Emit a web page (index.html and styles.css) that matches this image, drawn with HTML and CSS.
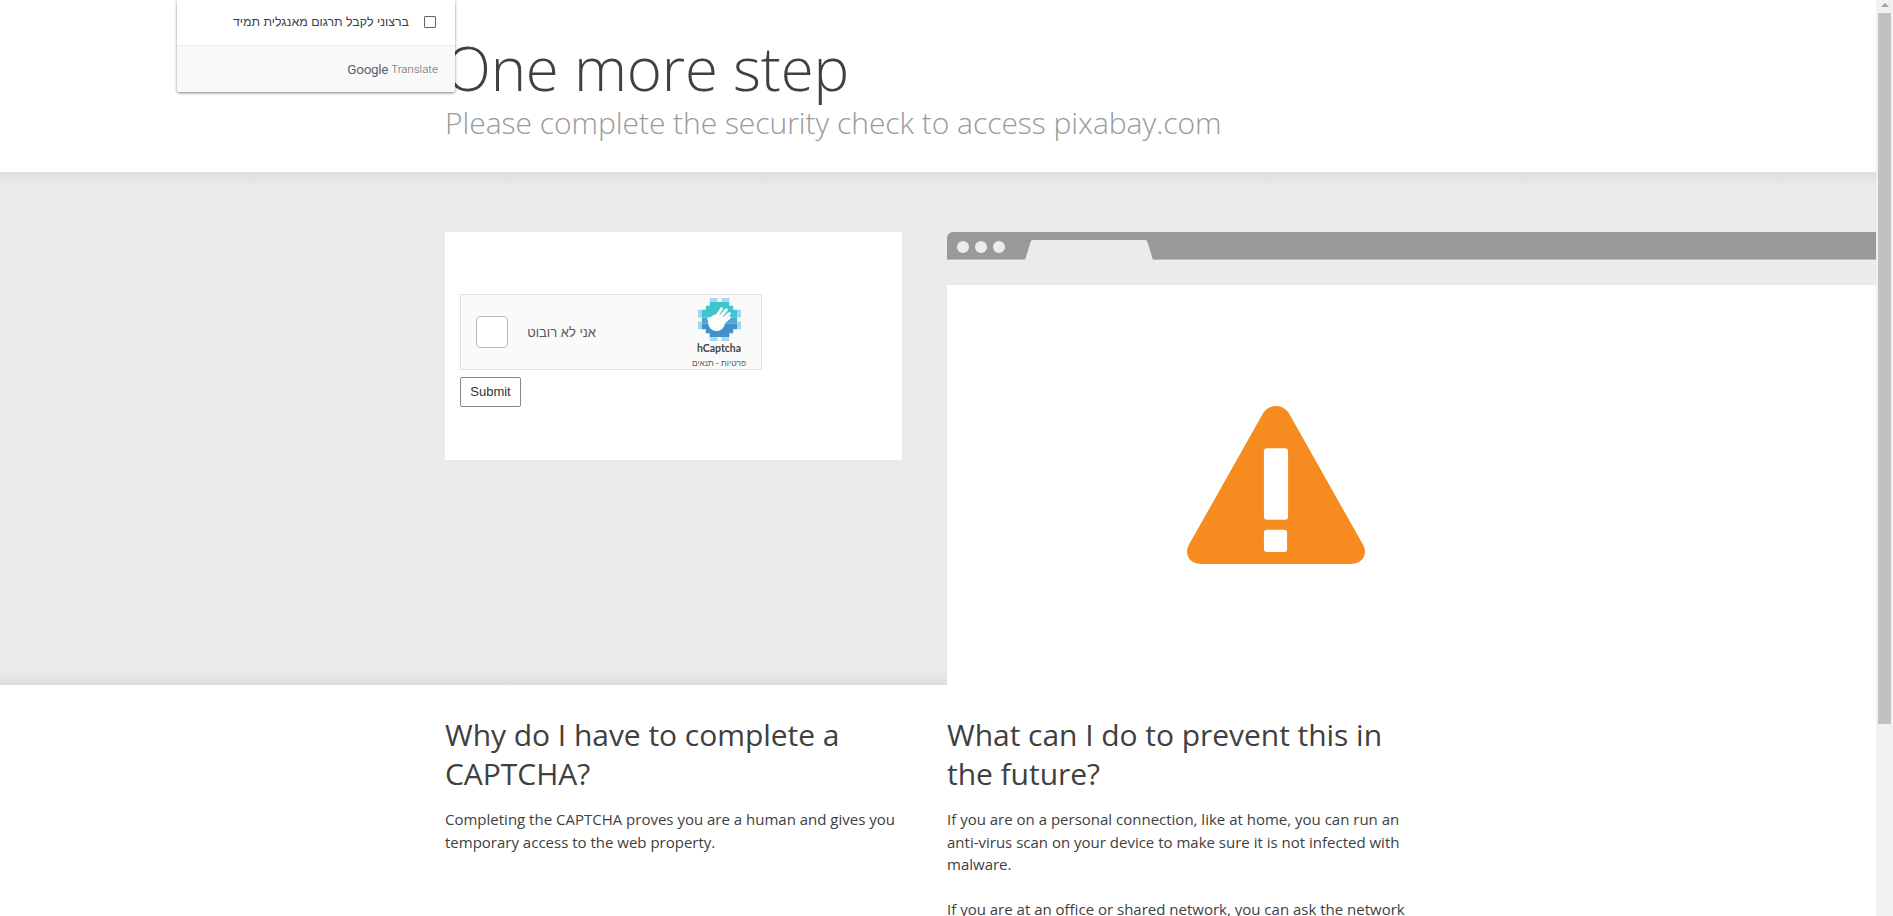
FILE: index.html
```html
<!DOCTYPE html>
<html lang="en">
<head>
  <meta charset="UTF-8">
  <meta name="viewport" content="width=device-width, initial-scale=1.0">
  <title>Attention Required</title>
  <link rel="stylesheet" href="styles.css">
</head>
<body>
  <div class="page">
    <header class="head">
      <h1>One more step</h1>
      <h2>Please complete the security check to access pixabay.com</h2>
    </header>

    <section class="check">
      <div class="form-box">
        <div class="captcha">
          <div class="captcha-box"></div>
          <div class="captcha-label" dir="rtl">אני לא רובוט</div>
          <div class="captcha-brand">
            <svg class="captcha-logo" width="43" height="43" viewBox="0 0 44 44">
              <g fill="#a9d5ec">
                <rect x="12" y="0" width="8" height="4"/><rect x="24" y="0" width="8" height="4"/>
                <rect x="0" y="12" width="4" height="8"/><rect x="40" y="12" width="4" height="8"/>
                <rect x="0" y="24" width="4" height="8"/><rect x="40" y="24" width="4" height="8"/>
                <rect x="12" y="40" width="8" height="4"/><rect x="24" y="40" width="8" height="4"/>
              </g>
              <path fill="#3ec6cf" d="M12 4h20v4h4v4h4v8H4v-8h4V8h4z"/>
              <path fill="#4aa9d1" d="M4 20h36v6H4z"/>
              <path fill="#4291cd" d="M4 26h36v6h-4v4h-4v4H12v-4H8v-4H4z"/>
              <circle cx="19" cy="25.500" r="8.500" fill="#fff"/>
              <g stroke="#fff" stroke-width="3" stroke-linecap="round" fill="none">
                <path d="M17 22l7-11"/><path d="M20 23l9-11"/><path d="M22 25l10-9"/><path d="M24 27l8-7"/><path d="M13 27l-2-6"/>
              </g>
            </svg>
            <div class="captcha-name">hCaptcha</div>
            <div class="captcha-links" dir="rtl">פרטיות - תנאים</div>
          </div>
        </div>
        <button class="submit">Submit</button>
      </div>

      <div class="browser">
        <div class="browser-bar">
          <span class="dot"></span><span class="dot"></span><span class="dot"></span>
          <svg class="tab" width="128" height="20" viewBox="0 0 128 20">
            <path fill="#ebebeb" d="M0 20L5.500 2Q6 0 8 0H120Q122 0 122.500 2L128 20Z"/>
          </svg>
        </div>
        <div class="browser-strip"></div>
        <div class="browser-view">
          <div class="warning">
            <svg width="180" height="158" viewBox="0 0 178 157">
              <path fill="#f68b1f" d="M76 7.500C82-2.500 96-2.500 102 7.500L175 137C181 147 175 157 163 157H15C3 157-3 147 3 137Z"/>
              <rect x="77" y="42" width="24" height="71" rx="3" fill="#fff"/>
              <rect x="77" y="123" width="23" height="22" rx="3" fill="#fff"/>
            </svg>
          </div>
        </div>
      </div>
    </section>

    <section class="info">
      <div class="info-col">
        <h2>Why do I have to complete a CAPTCHA?</h2>
        <p>Completing the CAPTCHA proves you are a human and gives you temporary access to the web property.</p>
      </div>
      <div class="info-col">
        <h2>What can I do to prevent this in the future?</h2>
        <p>If you are on a personal connection, like at home, you can run an anti-virus scan on your device to make sure it is not infected with malware.</p>
        <p>If you are at an office or shared network, you can ask the network</p>
      </div>
    </section>

    <div class="translate">
      <div class="translate-row" dir="rtl">
        <span class="translate-check"></span>
        <span>ברצוני לקבל תרגום מאנגלית תמיד</span>
      </div>
      <div class="translate-foot">
        <span class="google">Google</span><span class="translate-word">Translate</span>
      </div>
    </div>
  </div>

  <aside class="scrollbar">
    <div class="scroll-arrow"></div>
    <div class="scroll-thumb"></div>
  </aside>
</body>
</html>
```

FILE: styles.css
```css
html, body {
  height: 916px;
  overflow: hidden;
}
body {
  margin: 0;
  display: flex;
  background: #fff;
  color: #404040;
  font-family: "Open Sans", sans-serif;
}
.page {
  position: relative;
  flex: 1;
  min-width: 0;
  overflow: hidden;
}

.head {
  height: 172px;
  box-sizing: border-box;
  padding: 38px 0 0 445px;
}
.head h1 {
  margin: 0;
  font-size: 60px;
  line-height: 60px;
  font-weight: 300;
  letter-spacing: -0.2px;
}
.head h2 {
  margin: 0;
  padding-top: 5px;
  font-size: 30px;
  line-height: 40px;
  font-weight: 300;
  letter-spacing: -0.04px;
  color: #999;
}

.check {
  display: grid;
  grid-template-columns: 457px 1fr;
  column-gap: 45px;
  align-items: start;
  height: 513px;
  box-sizing: border-box;
  padding: 60px 0 0 445px;
  background: linear-gradient(#dedede, #ebebeb 3%, #ebebeb 97%, #dedede);
}
.form-box {
  height: 228px;
  box-sizing: border-box;
  padding: 62px 15px 0;
  background: #fff;
}
.captcha {
  display: flex;
  align-items: center;
  width: 302px;
  height: 76px;
  box-sizing: border-box;
  padding-left: 15px;
  background: #fafafa;
  border: 1px solid #e0e0e0;
}
.captcha-box {
  width: 30px;
  height: 30px;
  background: #fff;
  border: 1px solid #b8b8b8;
  border-radius: 4px;
}
.captcha-label {
  margin-left: 18px;
  width: 70px;
  font: 13px "Liberation Sans", sans-serif;
  white-space: nowrap;
  color: #555;
}
.captcha-brand {
  display: flex;
  flex-direction: column;
  align-items: center;
  margin: 0 7px 0 auto;
  width: 70px;
  align-self: flex-start;
  padding-top: 3px;
}
.captcha-logo {
  display: block;
}
.captcha-name {
  font: 700 10.5px/14px Lato, sans-serif;
  color: #444;
}
.captcha-links {
  margin-top: 3px;
  font: 8.300px/10px "Liberation Sans", sans-serif;
  color: #555;
}
.submit {
  display: block;
  width: 61px;
  height: 30px;
  margin-top: 7px;
  padding: 0 0 2px;
  background: #fff;
  border: 1px solid #888;
  border-radius: 2px;
  font: 13px "Liberation Sans", sans-serif;
  color: #333;
}

.browser {
  height: 453px;
}
.browser-bar {
  display: flex;
  align-items: flex-start;
  gap: 6px;
  height: 28px;
  box-sizing: border-box;
  padding: 9px 0 0 10px;
  background: #999;
  border-bottom: 1px solid #bbb;
  border-top-left-radius: 6px;
}
.dot {
  width: 12px;
  height: 12px;
  border-radius: 50%;
  background: #ececec;
}
.tab {
  display: block;
  margin: -1px 0 0 14px;
}
.browser-strip {
  height: 25px;
}
.browser-view {
  height: 400px;
  background: #fff;
}
.warning {
  display: flex;
  align-items: center;
  justify-content: center;
  width: 658px;
  height: 100%;
}

.info {
  display: grid;
  grid-template-columns: 457px 460px;
  column-gap: 45px;
  padding: 30px 0 0 445px;
}
.info-col h2 {
  margin: 0 0 15px;
  font-size: 30px;
  line-height: 39px;
  font-weight: 400;
  letter-spacing: -0.04px;
}
.info-col p {
  margin: 0 0 22px;
  font-size: 15px;
  line-height: 22.500px;
}

.translate {
  position: absolute;
  top: 0;
  left: 177px;
  width: 278px;
  height: 92px;
  background: #fff;
  border-radius: 0 0 3px 3px;
  box-shadow: 0 1px 3px rgba(0, 0, 0, 0.5);
  font-family: "Liberation Sans", sans-serif;
}
.translate-row {
  display: flex;
  align-items: center;
  gap: 15px;
  height: 45px;
  box-sizing: border-box;
  padding: 0 19px 1px 0;
  font-size: 12.400px;
  color: #3c4043;
}
.translate-check {
  width: 10px;
  height: 10px;
  border: 1.500px solid #5f6368;
  border-radius: 1px;
}
.translate-foot {
  display: flex;
  align-items: center;
  justify-content: flex-end;
  gap: 3px;
  height: 47px;
  box-sizing: border-box;
  padding: 0 17px 0 0;
  background: #f8f9fa;
  border-top: 1px solid #e8eaed;
  border-radius: 0 0 3px 3px;
  color: #5f6368;
  font-family: Roboto, sans-serif;
}
.google {
  font-size: 13.500px;
  letter-spacing: -0.3px;
}
.translate-word {
  font-size: 11.500px;
  font-weight: 300;
}

.scrollbar {
  flex: 0 0 17px;
  background: #f1f1f1;
}
.scroll-arrow {
  width: 0;
  height: 0;
  margin: 3px auto 6px;
  border-left: 4px solid transparent;
  border-right: 4px solid transparent;
  border-bottom: 4px solid #a3a3a3;
}
.scroll-thumb {
  width: 13px;
  height: 711px;
  margin: 0 auto;
  background: #c1c1c1;
}
```
